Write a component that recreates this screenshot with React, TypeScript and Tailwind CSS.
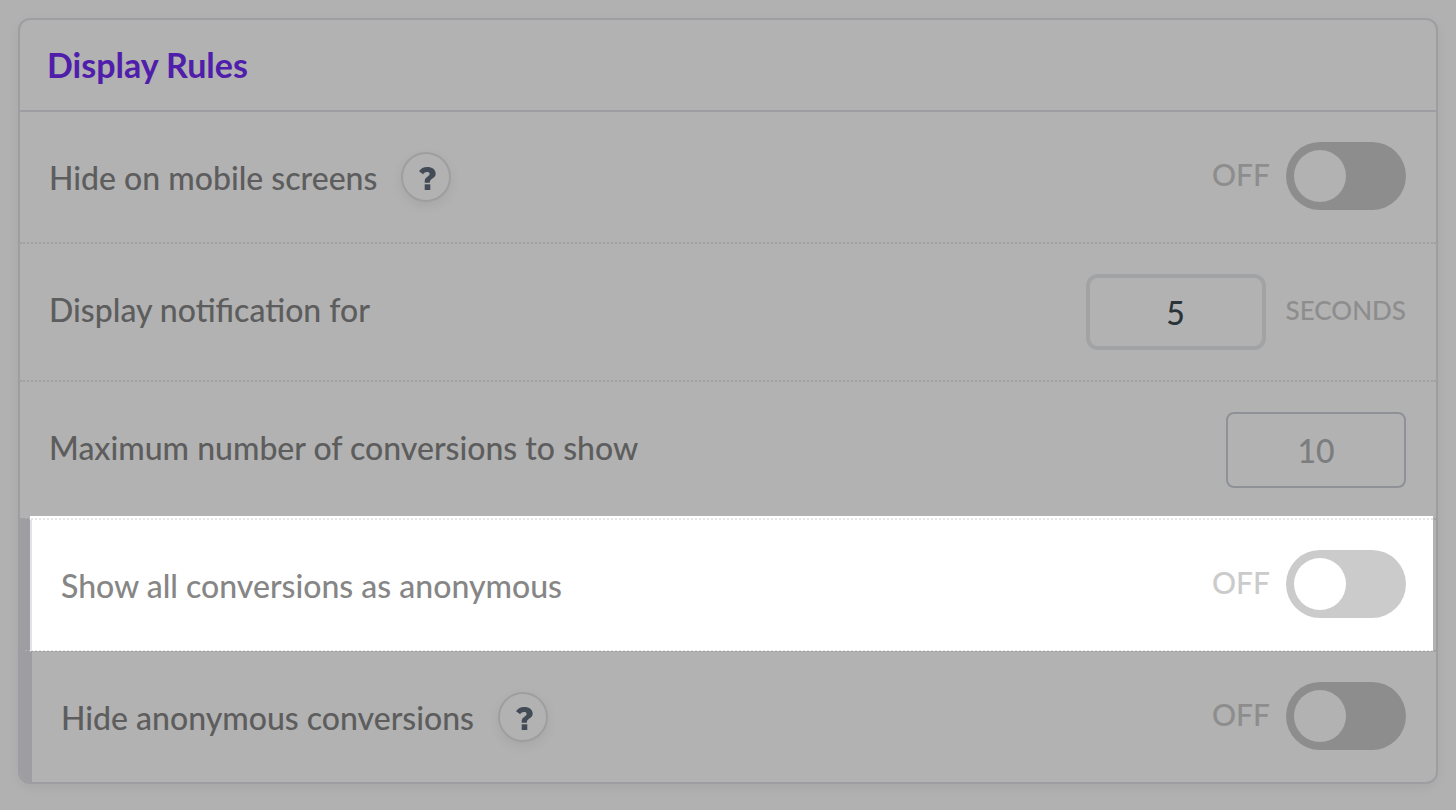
import React, { type FC, type ReactNode } from "react";

interface RowProps {
  children: ReactNode;
  className?: string;
}

const Row: FC<RowProps> = ({ children, className = "" }) => (
  <div
    className={`flex items-start justify-between pt-[30px] pr-[30px] pb-7 pl-[29px] ${className}`}
  >
    {children}
  </div>
);

interface RowLabelProps {
  htmlFor: string;
  children: ReactNode;
}

const RowLabel: FC<RowLabelProps> = ({ htmlFor, children }) => (
  <label
    htmlFor={htmlFor}
    className="text-[32px] leading-[72px] font-medium text-[#868686]"
  >
    {children}
  </label>
);

const HelpButton: FC<{ topic: string }> = ({ topic }) => (
  <button
    type="button"
    aria-label={`Help: ${topic}`}
    className="mt-2.5 flex size-[50px] items-center justify-center rounded-full border-2 border-[#e3e3e3] bg-white shadow-[0_4px_12px_rgba(0,0,0,0.07)]"
  >
    <svg
      viewBox="-3 -3 20 26"
      className="h-[26px] w-5"
      fill="#616d7c"
      aria-hidden="true"
    >
      <path d="M0 4.300C1.800 1.500 4.600 0 8.200 0c5 0 8.500 2.600 8.500 6.800 0 4.400-5.800 5-5.800 8.200v.7H5.700v-1.500C5.700 9.500 10.600 9.600 10.600 6.900 10.600 5.600 9.600 5 8 5c-1.700 0-2.900.8-3.900 2.300z" />
      <path d="M5.700 17.300h5.600V23H5.700z" />
    </svg>
  </button>
);

const Toggle: FC<{ id: string }> = ({ id }) => (
  <div className="flex items-start gap-4">
    <span className="text-[30px] leading-16 font-medium text-[#cbcbcb]">
      OFF
    </span>
    <input
      id={id}
      type="checkbox"
      role="switch"
      className="h-[68px] w-[120px] appearance-none rounded-full bg-[#cbcbcb] p-2 before:block before:size-[52px] before:rounded-full before:bg-white"
    />
  </div>
);

// Dims the whole page except for the row it sits in
const Spotlight: FC = () => (
  <div className="pointer-events-none absolute -top-1 right-[3px] -bottom-px -left-0.5 z-10 shadow-[0_0_0_3000px_rgba(0,0,0,0.3)]" />
);

export default function App() {
  return (
    <main className="min-h-screen overflow-hidden bg-[#fefefe] p-[18px] font-['Lato',sans-serif]">
      <section className="rounded-xl border-2 border-[#e2e2e9] bg-white shadow-[0_4px_12px_rgba(0,0,0,0.06)]">
        <header className="border-b-2 border-[#e2e2e9] px-[27px] py-[25px]">
          <h2 className="text-[34px] leading-10 font-bold text-[#722cf5]">
            Display Rules
          </h2>
        </header>

        <Row>
          <div className="flex items-start gap-6">
            <RowLabel htmlFor="hide-mobile">Hide on mobile screens</RowLabel>
            <HelpButton topic="Hide on mobile screens" />
          </div>
          <Toggle id="hide-mobile" />
        </Row>

        <Row className="border-t-2 border-dotted border-[#e6e6e6]">
          <RowLabel htmlFor="duration">Display notification for</RowLabel>
          <div className="mb-0.5 flex items-start gap-5">
            <input
              id="duration"
              type="text"
              defaultValue="5"
              className="h-[76px] w-[180px] rounded-xl border-4 border-[#e9eaec] bg-white text-center text-[32px] font-medium text-[#3d4950]"
            />
            <span className="text-[26px] leading-[72px] font-medium text-[#cbcbcb]">
              SECONDS
            </span>
          </div>
        </Row>

        <Row className="border-t-2 border-dotted border-[#e6e6e6]">
          <RowLabel htmlFor="max-conversions">
            Maximum number of conversions to show
          </RowLabel>
          <input
            id="max-conversions"
            type="text"
            defaultValue="10"
            className="mb-0.5 h-[76px] w-[180px] rounded-lg border-2 border-[#ccd2d8] bg-white text-center text-[32px] font-medium text-[#b0b3b7]"
          />
        </Row>

        <Row className="relative border-t-2 border-l-12 border-[#e2e2e9] border-t-[#e6e6e6] [border-top-style:dotted]">
          <RowLabel htmlFor="all-anonymous">
            Show all conversions as anonymous
          </RowLabel>
          <Toggle id="all-anonymous" />
          <Spotlight />
        </Row>

        <Row className="rounded-bl-[10px] border-t-2 border-l-12 border-[#e2e2e9] border-t-[#e6e6e6] [border-top-style:dotted]">
          <div className="flex items-start gap-6">
            <RowLabel htmlFor="hide-anonymous">
              Hide anonymous conversions
            </RowLabel>
            <HelpButton topic="Hide anonymous conversions" />
          </div>
          <Toggle id="hide-anonymous" />
        </Row>
      </section>
    </main>
  );
}
